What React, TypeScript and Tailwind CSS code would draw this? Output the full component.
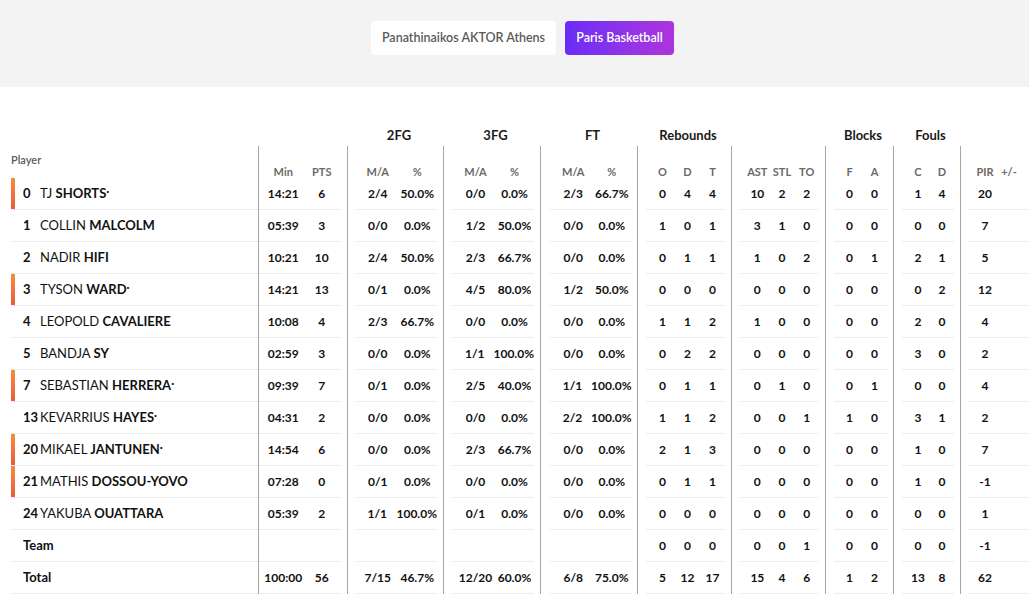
import React from "react";

type Row = {
  num?: string;
  first?: string;
  last: string;
  starter?: boolean;
  dot?: boolean;
  bold?: boolean;
  v: string[][];
};

const groups = [
  { key: "min", w: "w-[89px]", line: "ml-0 mr-[6px]", pl: "pl-[5px]", col: "w-[40px]", heads: ["Min", "PTS"] },
  { key: "fg2", w: "w-[96px]", line: "ml-[8px] mr-[6px]", pl: "pl-[2px]", col: "w-[42px]", heads: ["M/A", "%"] },
  { key: "fg3", w: "w-[97px]", line: "ml-[8px] mr-[6px]", pl: "pl-[4px]", col: "w-[42px]", heads: ["M/A", "%"] },
  { key: "ft", w: "w-[97px]", line: "ml-[8px] mr-[6px]", pl: "pl-[5px]", col: "w-[40px]", heads: ["M/A", "%"] },
  { key: "reb", w: "w-[94px]", line: "ml-[8px] mr-[6px]", pl: "pl-[4px]", col: "w-[26px]", heads: ["O", "D", "T"] },
  { key: "misc", w: "w-[94px]", line: "ml-[8px] mr-[6px]", pl: "pl-[5px]", col: "w-[25px]", heads: ["AST", "STL", "TO"] },
  { key: "blk", w: "w-[68px]", line: "ml-[8px] mr-[6px]", pl: "pl-[3px]", col: "w-[26px]", heads: ["F", "A"] },
  { key: "fouls", w: "w-[67px]", line: "ml-[8px] mr-[6px]", pl: "pl-[4px]", col: "w-[25px]", heads: ["C", "D"] },
  { key: "pir", w: "w-[69px]", line: "ml-[8px] mr-0", pl: "pl-[4px]", col: "w-[24px]", heads: ["PIR", "+/-"] },
];

const labels = ["", "2FG", "3FG", "FT", "Rebounds", "", "Blocks", "Fouls", ""];

const rows: Row[] = [
  { num: "0", first: "TJ", last: "SHORTS", starter: true, dot: true, v: [["14:21", "6"], ["2/4", "50.0%"], ["0/0", "0.0%"], ["2/3", "66.7%"], ["0", "4", "4"], ["10", "2", "2"], ["0", "0"], ["1", "4"], ["20", ""]] },
  { num: "1", first: "COLLIN", last: "MALCOLM", v: [["05:39", "3"], ["0/0", "0.0%"], ["1/2", "50.0%"], ["0/0", "0.0%"], ["1", "0", "1"], ["3", "1", "0"], ["0", "0"], ["0", "0"], ["7", ""]] },
  { num: "2", first: "NADIR", last: "HIFI", v: [["10:21", "10"], ["2/4", "50.0%"], ["2/3", "66.7%"], ["0/0", "0.0%"], ["0", "1", "1"], ["1", "0", "2"], ["0", "1"], ["2", "1"], ["5", ""]] },
  { num: "3", first: "TYSON", last: "WARD", starter: true, dot: true, v: [["14:21", "13"], ["0/1", "0.0%"], ["4/5", "80.0%"], ["1/2", "50.0%"], ["0", "0", "0"], ["0", "0", "0"], ["0", "0"], ["0", "2"], ["12", ""]] },
  { num: "4", first: "LEOPOLD", last: "CAVALIERE", v: [["10:08", "4"], ["2/3", "66.7%"], ["0/0", "0.0%"], ["0/0", "0.0%"], ["1", "1", "2"], ["1", "0", "0"], ["0", "0"], ["2", "0"], ["4", ""]] },
  { num: "5", first: "BANDJA", last: "SY", v: [["02:59", "3"], ["0/0", "0.0%"], ["1/1", "100.0%"], ["0/0", "0.0%"], ["0", "2", "2"], ["0", "0", "0"], ["0", "0"], ["3", "0"], ["2", ""]] },
  { num: "7", first: "SEBASTIAN", last: "HERRERA", starter: true, dot: true, v: [["09:39", "7"], ["0/1", "0.0%"], ["2/5", "40.0%"], ["1/1", "100.0%"], ["0", "1", "1"], ["0", "1", "0"], ["0", "1"], ["0", "0"], ["4", ""]] },
  { num: "13", first: "KEVARRIUS", last: "HAYES", dot: true, v: [["04:31", "2"], ["0/0", "0.0%"], ["0/0", "0.0%"], ["2/2", "100.0%"], ["1", "1", "2"], ["0", "0", "1"], ["1", "0"], ["3", "1"], ["2", ""]] },
  { num: "20", first: "MIKAEL", last: "JANTUNEN", starter: true, dot: true, v: [["14:54", "6"], ["0/0", "0.0%"], ["2/3", "66.7%"], ["0/0", "0.0%"], ["2", "1", "3"], ["0", "0", "0"], ["0", "0"], ["1", "0"], ["7", ""]] },
  { num: "21", first: "MATHIS", last: "DOSSOU-YOVO", starter: true, v: [["07:28", "0"], ["0/1", "0.0%"], ["0/0", "0.0%"], ["0/0", "0.0%"], ["0", "1", "1"], ["0", "0", "0"], ["0", "0"], ["1", "0"], ["-1", ""]] },
  { num: "24", first: "YAKUBA", last: "OUATTARA", v: [["05:39", "2"], ["1/1", "100.0%"], ["0/1", "0.0%"], ["0/0", "0.0%"], ["0", "0", "0"], ["0", "0", "0"], ["0", "0"], ["0", "0"], ["1", ""]] },
  { last: "Team", bold: true, v: [["", ""], ["", ""], ["", ""], ["", ""], ["0", "0", "0"], ["0", "0", "1"], ["0", "0"], ["0", "0"], ["-1", ""]] },
  { last: "Total", bold: true, v: [["100:00", "56"], ["7/15", "46.7%"], ["12/20", "60.0%"], ["6/8", "75.0%"], ["5", "12", "17"], ["15", "4", "6"], ["1", "2"], ["13", "8"], ["62", ""]] },
];

function PlayerCell({ row }: { row: Row }) {
  return (
    <div className="w-[247px] h-[32px] border-b border-[#ececec] flex items-stretch">
      <div
        className={
          row.starter
            ? "w-[4px] bg-gradient-to-b from-[#f28d3c] to-[#e65c40]"
            : "w-[4px]"
        }
      />
      <div className="flex items-center pl-[8px] pt-[1px] text-[13px] text-[#111]">
        {row.bold ? (
          <span className="font-bold">{row.last}</span>
        ) : (
          <>
            <span className="w-[17px] shrink-0 font-bold">{row.num}</span>
            <span>{row.first}&nbsp;</span>
            <span className="font-bold">{row.last}</span>
            {row.dot && <span className="font-bold text-[11px] relative -top-[3px]">·</span>}
          </>
        )}
      </div>
    </div>
  );
}

export default function App() {
  return (
    <div className="min-h-[603px] bg-white font-['Lato','Liberation_Sans',sans-serif]">
      <div className="h-[87px] bg-[#f3f3f3] flex justify-center pl-[16px] pt-[21px] gap-[9px]">
        <button className="w-[185px] h-[34px] rounded-[4px] bg-white text-[12.5px] font-semibold text-[#5a5a5a]">
          Panathinaikos AKTOR Athens
        </button>
        <button className="w-[109px] h-[34px] rounded-[4px] bg-gradient-to-r from-[#6a2bf6] to-[#ad33dc] text-[12.5px] font-semibold text-white">
          Paris Basketball
        </button>
      </div>

      <div className="pl-[11px] pt-[35px]">
        {/* group labels */}
        <div className="flex h-[24px]">
          <div className="w-[247px]" />
          {groups.map((g, i) => (
            <div key={g.key} className={`${g.w} flex justify-center pl-[8px] pt-[5px] text-[13px] leading-[16px] font-bold text-[#1a1a1a]`}>
              {labels[i]}
            </div>
          ))}
        </div>

        {/* column heads */}
        <div className="flex h-[32px]">
          <div className="w-[247px] pt-[7px] text-[11px] leading-[14px] font-semibold text-[#5c5c5c]">Player</div>
          {groups.map((g) => (
            <div key={g.key} className={`${g.w} border-l border-[#a6a6a6]`}>
              <div className={`${g.line} ${g.pl} flex pt-[19px] text-[11px] leading-[14px] font-bold text-[#6a6a6a]`}>
                {g.heads.map((h, j) => (
                  <div key={j} className={`${g.col} text-center`}>{h}</div>
                ))}
              </div>
            </div>
          ))}
        </div>

        {rows.map((row, ri) => (
          <div key={ri} className="flex">
            <PlayerCell row={row} />
            {groups.map((g, gi) => (
              <div key={g.key} className={`${g.w} border-l border-[#a6a6a6]`}>
                <div className={`${g.line} ${g.pl} h-[32px] pt-[1px] flex items-center border-b border-[#ececec] text-[12px] font-bold text-[#111]`}>
                  {row.v[gi].map((c, j) => (
                    <div key={j} className={`${g.col} text-center whitespace-nowrap`}>{c}</div>
                  ))}
                </div>
              </div>
            ))}
          </div>
        ))}
      </div>
    </div>
  );
}
